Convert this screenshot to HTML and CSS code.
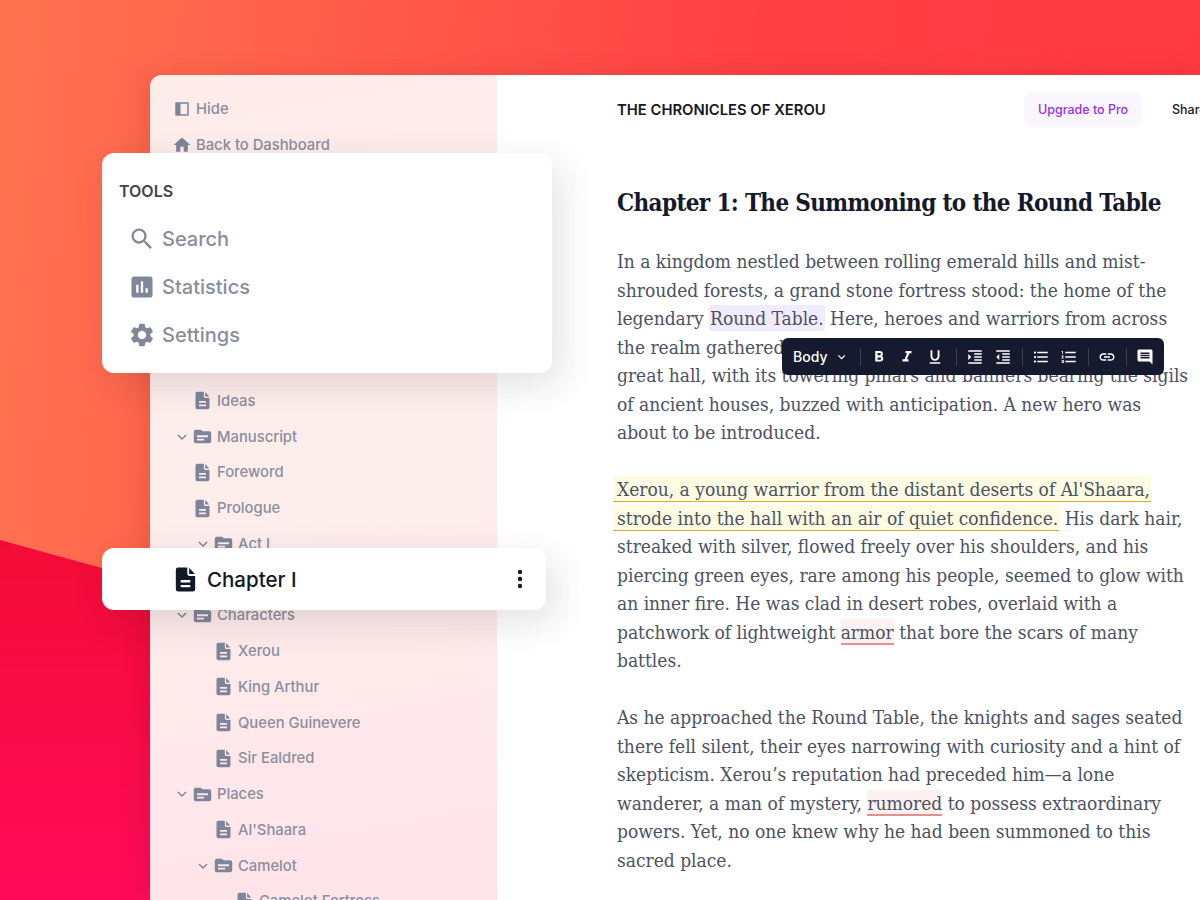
FILE: index.html
```html
<!DOCTYPE html>
<html lang="en">

<head>
    <meta charset="UTF-8">
    <title>The Chronicles of Xerou</title>
    <link rel="stylesheet" href="styles.css">
</head>

<body>
    <svg class="sprite" aria-hidden="true">
        <symbol id="i-doc" viewBox="0 0 24 24">
            <path fill-rule="evenodd" d="M13.5 2H6a2 2 0 0 0-2 2v16a2 2 0 0 0 2 2h12a2 2 0 0 0 2-2V9h-5a1.500 1.500 0 0 1-1.500-1.500V2zM8 12.500h8v2H8v-2zm0 4h8v2H8v-2z" />
            <path d="M15 2.300 19.700 7.500H15z" />
        </symbol>
        <symbol id="i-folder" viewBox="0 0 24 24">
            <path fill-rule="evenodd" d="M10 3.500H3.500A2.500 2.500 0 0 0 1 6v12a2.500 2.500 0 0 0 2.500 2.500h17A2.500 2.500 0 0 0 23 18V8a2.500 2.500 0 0 0-2.500-2.500H12l-2-2zM5 10.500h14v2.500H5v-2.500zm0 4.200h9v2.500H5v-2.500z" />
        </symbol>
        <symbol id="i-chev" viewBox="0 0 24 24">
            <path d="M5 8.500l7 7 7-7" fill="none" stroke="currentColor" stroke-width="2.600" />
        </symbol>
    </svg>

    <div class="backdrop"></div>

    <div class="window">
        <aside class="sidebar">
            <div class="row top-row">
                <svg class="icon hide-icon" viewBox="0 0 24 24">
                    <path fill-rule="evenodd" d="M4 3h16a1 1 0 0 1 1 1v16a1 1 0 0 1-1 1H4a1 1 0 0 1-1-1V4a1 1 0 0 1 1-1zm6 2v14h9V5h-9z" />
                </svg>
                <span>Hide</span>
            </div>
            <div class="row top-row">
                <svg class="icon icon-lg" viewBox="0 0 24 24"><path d="M10 20v-6h4v6h5v-8h3L12 3 2 12h3v8z" /></svg>
                <span>Back to Dashboard</span>
            </div>

            <div class="tree">
                <div class="row lv1"><svg class="icon"><use href="#i-doc" /></svg><span>Ideas</span></div>
                <div class="row lv0"><svg class="chev"><use href="#i-chev" /></svg><svg class="icon folder"><use href="#i-folder" /></svg><span>Manuscript</span></div>
                <div class="row lv1"><svg class="icon"><use href="#i-doc" /></svg><span>Foreword</span></div>
                <div class="row lv1"><svg class="icon"><use href="#i-doc" /></svg><span>Prologue</span></div>
                <div class="row lv1b"><svg class="chev"><use href="#i-chev" /></svg><svg class="icon folder"><use href="#i-folder" /></svg><span>Act I</span></div>
                <div class="row lv2"></div>
                <div class="row lv0"><svg class="chev"><use href="#i-chev" /></svg><svg class="icon folder"><use href="#i-folder" /></svg><span>Characters</span></div>
                <div class="row lv2"><svg class="icon"><use href="#i-doc" /></svg><span>Xerou</span></div>
                <div class="row lv2"><svg class="icon"><use href="#i-doc" /></svg><span>King Arthur</span></div>
                <div class="row lv2"><svg class="icon"><use href="#i-doc" /></svg><span>Queen Guinevere</span></div>
                <div class="row lv2"><svg class="icon"><use href="#i-doc" /></svg><span>Sir Ealdred</span></div>
                <div class="row lv0"><svg class="chev"><use href="#i-chev" /></svg><svg class="icon folder"><use href="#i-folder" /></svg><span>Places</span></div>
                <div class="row lv2"><svg class="icon"><use href="#i-doc" /></svg><span>Al'Shaara</span></div>
                <div class="row lv1b"><svg class="chev"><use href="#i-chev" /></svg><svg class="icon folder"><use href="#i-folder" /></svg><span>Camelot</span></div>
                <div class="row lv3"><svg class="icon"><use href="#i-doc" /></svg><span>Camelot Fortress</span></div>
            </div>
        </aside>

        <main class="main">
            <header class="topbar">
                <div class="book-title">THE CHRONICLES OF XEROU</div>
                <div class="upgrade">Upgrade to Pro</div>
                <div class="share">Share</div>
            </header>

            <article class="doc">
                <h1>Chapter 1: The Summoning to the Round Table</h1>
                <p>
                    In a kingdom nestled between rolling emerald hills and mist-<br>
                    shrouded forests, a grand stone fortress stood: the home of the<br>
                    legendary <span class="hl-purple">Round Table.</span> Here, heroes and warriors from across<br>
                    the realm gathered to seek glory and honor. That day, the<br>
                    great hall, with its towering pillars and banners bearing the sigils<br>
                    of ancient houses, buzzed with anticipation. A new hero was<br>
                    about to be introduced.
                </p>
                <p>
                    <span class="hl-yellow">Xerou, a young warrior from the distant deserts of Al'Shaara,</span><br>
                    <span class="hl-yellow">strode into the hall with an air of quiet confidence.</span> His dark hair,<br>
                    streaked with silver, flowed freely over his shoulders, and his<br>
                    piercing green eyes, rare among his people, seemed to glow with<br>
                    an inner fire. He was clad in desert robes, overlaid with a<br>
                    patchwork of lightweight <span class="hl-red">armor</span> that bore the scars of many<br>
                    battles.
                </p>
                <p>
                    As he approached the Round Table, the knights and sages seated<br>
                    there fell silent, their eyes narrowing with curiosity and a hint of<br>
                    skepticism. Xerou’s reputation had preceded him—a lone<br>
                    wanderer, a man of mystery, <span class="hl-red">rumored</span> to possess extraordinary<br>
                    powers. Yet, no one knew why he had been summoned to this<br>
                    sacred place.
                </p>
            </article>
        </main>
    </div>

    <!-- floating cards -->
    <div class="tools-card">
        <div class="tools-title">TOOLS</div>
        <div class="tool">
            <svg viewBox="0 0 24 24"><path d="M15.500 14h-.79l-.28-.27A6.471 6.471 0 0 0 16 9.500 6.500 6.500 0 1 0 9.500 16c1.610 0 3.090-.59 4.230-1.570l.27.28v.79l5 4.990L20.490 19l-4.990-5zm-6 0C7.010 14 5 11.990 5 9.500S7.010 5 9.500 5 14 7.010 14 9.500 11.990 14 9.500 14z" /></svg>
            <span>Search</span>
        </div>
        <div class="tool">
            <svg viewBox="0 0 24 24"><path d="M19 3H5c-1.100 0-2 .9-2 2v14c0 1.100.9 2 2 2h14c1.100 0 2-.9 2-2V5c0-1.100-.9-2-2-2zM9 17H7v-7h2v7zm4 0h-2V7h2v10zm4 0h-2v-4h2v4z" /></svg>
            <span>Statistics</span>
        </div>
        <div class="tool">
            <svg viewBox="0 0 24 24"><path d="M19.140 12.940c.04-.3.06-.61.06-.94 0-.32-.02-.64-.07-.94l2.030-1.580c.18-.14.23-.41.12-.61l-1.920-3.320c-.12-.22-.37-.29-.59-.22l-2.390.96c-.5-.38-1.030-.7-1.620-.94l-.36-2.540c-.04-.24-.24-.41-.48-.41h-3.840c-.24 0-.43.17-.47.41l-.36 2.540c-.59.24-1.130.57-1.620.94l-2.390-.96c-.22-.08-.47 0-.59.22L2.740 8.870c-.12.21-.08.47.12.61l2.030 1.580c-.05.3-.09.63-.09.94s.02.64.07.94l-2.030 1.580c-.18.14-.23.41-.12.61l1.920 3.320c.12.22.37.29.59.22l2.390-.96c.5.38 1.030.7 1.620.94l.36 2.540c.05.24.24.41.48.41h3.840c.24 0 .44-.17.47-.41l.36-2.540c.59-.24 1.130-.56 1.620-.94l2.390.96c.22.08.47 0 .59-.22l1.920-3.320c.12-.22.07-.47-.12-.61l-2.010-1.580zM12 15.600c-1.980 0-3.600-1.620-3.600-3.600s1.620-3.600 3.600-3.600 3.600 1.620 3.600 3.600-1.620 3.600-3.600 3.600z" /></svg>
            <span>Settings</span>
        </div>
    </div>

    <div class="chapter-card">
        <svg class="chapter-icon"><use href="#i-doc" /></svg>
        <span class="chapter-name">Chapter I</span>
        <svg class="kebab" viewBox="0 0 24 24">
            <circle cx="12" cy="5" r="2.200" />
            <circle cx="12" cy="12" r="2.200" />
            <circle cx="12" cy="19" r="2.200" />
        </svg>
    </div>

    <div class="toolbar">
        <span class="tb-style">Body</span>
        <svg class="tb-chev"><use href="#i-chev" /></svg>
        <i class="sep"></i>
        <svg class="tb" viewBox="0 0 24 24"><path d="M15.600 10.790c.97-.67 1.650-1.770 1.650-2.790 0-2.260-1.750-4-4-4H7v14h7.040c2.090 0 3.710-1.700 3.710-3.790 0-1.520-.86-2.820-2.150-3.420zM10 6.500h3c.83 0 1.500.67 1.500 1.500s-.67 1.500-1.500 1.500h-3v-3zm3.500 9H10v-3h3.500c.83 0 1.500.67 1.500 1.500s-.67 1.500-1.500 1.500z" /></svg>
        <svg class="tb" viewBox="0 0 24 24"><path d="M10 4v3h2.210l-3.420 8H6v3h8v-3h-2.210l3.420-8H18V4z" /></svg>
        <svg class="tb" viewBox="0 0 24 24"><path d="M12 17c3.310 0 6-2.690 6-6V3h-2.500v8c0 1.930-1.570 3.500-3.500 3.500S8.500 12.930 8.500 11V3H6v8c0 3.310 2.690 6 6 6zm-7 2v2h14v-2H5z" /></svg>
        <i class="sep mid"></i>
        <svg class="tb" viewBox="0 0 24 24"><path d="M3 21h18v-2H3v2zM3 8v8l4-4-4-4zm8 9h10v-2H11v2zM3 3v2h18V3H3zm8 6h10V7H11v2zm0 4h10v-2H11v2z" /></svg>
        <svg class="tb" viewBox="0 0 24 24"><path d="M11 17h10v-2H11v2zm-8-5l4 4V8l-4 4zm0 9h18v-2H3v2zM3 3v2h18V3H3zm8 6h10V7H11v2zm0 4h10v-2H11v2z" /></svg>
        <i class="sep"></i>
        <svg class="tb" viewBox="0 0 24 24"><path d="M4 10.500c-.83 0-1.500.67-1.500 1.500s.67 1.500 1.500 1.500 1.500-.67 1.500-1.500-.67-1.500-1.500-1.500zm0-6c-.83 0-1.500.67-1.500 1.500S3.170 7.500 4 7.500 5.500 6.830 5.500 6 4.830 4.500 4 4.500zm0 12c-.83 0-1.500.68-1.500 1.500s.68 1.500 1.500 1.500 1.500-.68 1.500-1.500-.67-1.500-1.500-1.500zM7 19h14v-2H7v2zm0-6h14v-2H7v2zm0-8v2h14V5H7z" /></svg>
        <svg class="tb" viewBox="0 0 24 24"><path d="M2 17h2v.5H3v1h1v.5H2v1h3v-4H2v1zm1-9h1V4H2v1h1v3zm-1 3h1.800L2 13.100v.9h3v-1H3.200L5 10.900V10H2v1zm5-6v2h14V5H7zm0 14h14v-2H7v2zm0-6h14v-2H7v2z" /></svg>
        <i class="sep"></i>
        <svg class="tb" viewBox="0 0 24 24"><path d="M3.900 12c0-1.710 1.390-3.100 3.100-3.100h4V7H7c-2.760 0-5 2.240-5 5s2.240 5 5 5h4v-1.900H7c-1.710 0-3.100-1.390-3.100-3.100zM8 13h8v-2H8v2zm9-6h-4v1.900h4c1.710 0 3.100 1.390 3.100 3.100s-1.390 3.100-3.100 3.100h-4V17h4c2.760 0 5-2.240 5-5s-2.240-5-5-5z" /></svg>
        <i class="sep"></i>
        <svg class="tb" viewBox="0 0 24 24"><path d="M21.990 4c0-1.100-.89-2-1.990-2H4c-1.100 0-2 .9-2 2v12c0 1.100.9 2 2 2h14l4 4-.01-18zM18 14H6v-2h12v2zm0-3H6V9h12v2zm0-3H6V6h12v2z" /></svg>
    </div>
</body>

</html>
```

FILE: styles.css
```css
* {
    box-sizing: border-box;
}

html,
body {
    height: 900px;
    overflow: hidden;
}

body {
    margin: 0;
    position: relative;
    padding: 75px 0 0 150px;
    font-family: "Inter", "Liberation Sans", sans-serif;
    background: linear-gradient(95deg, #ff7350 0%, #ff5a4a 30%, #ff4043 60%, #ff383f 100%);
}

.sprite {
    position: absolute;
    width: 0;
    height: 0;
}

.backdrop {
    position: absolute;
    left: 0;
    top: 0;
    width: 1200px;
    height: 900px;
    background: linear-gradient(180deg, #f00c30 55%, #ff0a5a 100%);
    clip-path: polygon(0 540px, 400px 650px, 400px 900px, 0 900px);
}

/* window */
.window {
    position: relative;
    display: flex;
    width: 1050px;
    height: 825px;
    background: #fff;
    border-radius: 12px 0 0 0;
    overflow: hidden;
    box-shadow: -6px 0 24px rgba(90, 20, 20, 0.12);
}

.sidebar {
    width: 347px;
    flex-shrink: 0;
    padding: 16.500px 0 0 20px;
    background: linear-gradient(170deg, #fdecea 0%, #fdeeec 50%, #ffe3e9 100%);
}

.row {
    display: flex;
    align-items: center;
    height: 35.750px;
    font-size: 14.800px;
    font-weight: 500;
    color: #8a8e9e;
}

.top-row {
    padding-left: 3px;
}

.icon {
    width: 21px;
    height: 21px;
    margin-right: 4.500px;
    fill: #7f8598;
    flex-shrink: 0;
}

.hide-icon {
    width: 18px;
    height: 18px;
    margin-right: 5px;
}

.icon-lg {
    width: 20px;
    height: 20px;
    margin: 0 4px 0 -1px;
}

.folder {
    width: 19px;
    height: 19px;
    margin-right: 5px;
}

.chev {
    width: 14px;
    height: 14px;
    margin-right: 4px;
    color: #7f8598;
    flex-shrink: 0;
}

.tree {
    margin-top: 220px;
}

.lv0 { padding-left: 5px; }
.lv1 { padding-left: 21.500px; }
.lv1b { padding-left: 26px; }
.lv2 { padding-left: 42.500px; }
.lv3 { padding-left: 63.500px; }

/* main */
.main {
    flex: 1;
    padding-left: 120px;
}

.topbar {
    display: flex;
    align-items: center;
    height: 35px;
    margin-top: 17px;
    white-space: nowrap;
}

.book-title {
    width: 407px;
    flex-shrink: 0;
    font-size: 14.800px;
    font-weight: 600;
    color: #141824;
}

.upgrade {
    width: 118px;
    height: 35px;
    line-height: 35px;
    text-align: center;
    font-size: 12.500px;
    font-weight: 500;
    color: #9333ea;
    background: #faf6ff;
    border-radius: 8px;
}

.share {
    margin-left: 30px;
    font-size: 12.500px;
    font-weight: 500;
    color: #141824;
}

.doc {
    width: 600px;
    font-family: "DejaVu Serif Condensed", "DejaVu Serif", serif;
    font-stretch: condensed;
    white-space: nowrap;
}

.doc h1 {
    margin: 58px 0 26px;
    font-size: 24px;
    line-height: 36px;
    font-weight: 700;
    letter-spacing: -0.650px;
    color: #141a2c;
}

.doc p {
    margin: 0 0 28.500px;
    font-size: 19px;
    line-height: 28.500px;
    color: #4b5163;
}

.hl-purple {
    background: #f1ecfd;
    padding: 2px 1px;
    border-radius: 2px;
}

.hl-yellow {
    background: #fdfbe2;
    border-bottom: 1.500px solid #dcaa2e;
    padding: 2px 1px 1px 4px;
    margin-left: -4px;
}

.hl-red {
    background: #fef1f1;
    border-bottom: 2px solid #e98d8d;
    padding-top: 2px;
}

/* floating cards */
.tools-card {
    position: absolute;
    left: 102px;
    top: 153px;
    width: 450px;
    height: 220px;
    padding: 29px 17px 0;
    background: #fff;
    border-radius: 12px;
    box-shadow: 8px 12px 36px rgba(50, 30, 40, 0.13);
}

.tools-title {
    margin-bottom: 15px;
    font-size: 16px;
    line-height: 18px;
    font-weight: 600;
    color: #3f4454;
}

.tool {
    display: flex;
    align-items: center;
    height: 48px;
    padding-left: 9px;
    font-size: 20px;
    font-weight: 500;
    color: #878e9e;
}

.tool svg {
    width: 28px;
    height: 28px;
    margin-right: 6px;
    fill: #7f8799;
}

.chapter-card {
    position: absolute;
    left: 102px;
    top: 548px;
    display: flex;
    align-items: center;
    width: 444px;
    height: 62px;
    padding: 0 14px 0 69px;
    background: #fff;
    border-radius: 12px;
    box-shadow: 8px 12px 36px rgba(50, 30, 40, 0.13);
}

.chapter-icon {
    width: 29px;
    height: 29px;
    margin-right: 7px;
    fill: #111827;
}

.chapter-name {
    flex: 1;
    font-size: 20.500px;
    font-weight: 500;
    color: #111827;
}

.kebab {
    width: 24px;
    height: 24px;
    fill: #111827;
}

.toolbar {
    position: absolute;
    left: 782px;
    top: 338px;
    display: flex;
    align-items: center;
    width: 382px;
    height: 37px;
    padding-left: 11px;
    background: #151a2e;
    border-radius: 6px;
}

.tb-style {
    width: 46px;
    font-size: 14px;
    font-weight: 500;
    color: #fff;
}

.tb-chev {
    width: 12px;
    height: 12px;
    color: #fff;
}

.tb {
    width: 18px;
    height: 18px;
    margin-right: 10px;
    fill: #fff;
    flex-shrink: 0;
}

.tb-chev + .sep {
    margin-left: 13px;
}

.sep {
    width: 1px;
    height: 18px;
    margin-right: 9px;
    background: #3a3f52;
    flex-shrink: 0;
}

.sep.mid {
    margin-left: 2px;
}
```
